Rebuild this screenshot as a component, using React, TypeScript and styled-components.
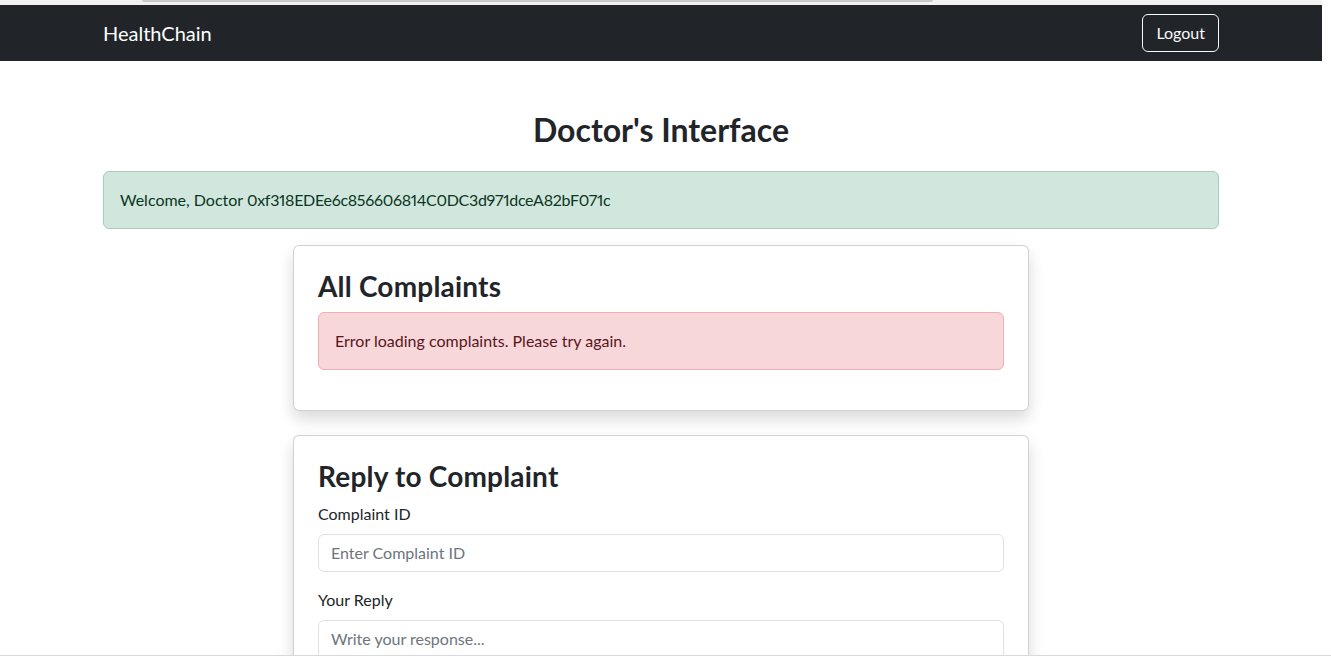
import React from "react";
import styled, { createGlobalStyle } from "styled-components";

const Global = createGlobalStyle`
  * { box-sizing: border-box; }
  html, body { margin: 0; padding: 0; background: #fff; overflow: hidden; }
  body {
    font-family: Lato, "Open Sans", Arial, sans-serif;
    font-size: 16px;
    line-height: 1.5;
    color: #212529;
    font-variant-numeric: proportional-nums;
  }
`;

const Page = styled.div`
  width: calc(100% - 9px);
`;

const TopStrip = styled.div`
  height: 5px;
  background: #f1f1f1;
  display: flex;
  align-items: flex-start;
`;

const Thumb = styled.div`
  margin-left: 142px;
  width: 791px;
  height: 2px;
  background: #c9c9c9;
  border-radius: 0 0 2px 2px;
`;

const Navbar = styled.nav`
  background: #212529;
  padding: 8px 0;
`;

const Container = styled.div`
  max-width: 1140px;
  margin: 0 auto;
  padding: 0 12px;
`;

const NavInner = styled(Container)`
  display: flex;
  align-items: center;
  justify-content: space-between;
`;

const Brand = styled.a`
  color: #fff;
  font-size: 20px;
  line-height: 30px;
  padding: 5px 0;
  text-decoration: none;
`;

const OutlineButton = styled.button`
  font-family: inherit;
  font-size: 16px;
  line-height: 24px;
  padding: 6px 13px;
  border: 1px solid #f8f9fa;
  border-radius: 6px;
  background: transparent;
  color: #f8f9fa;
  cursor: pointer;
`;

const Main = styled(Container)`
  margin-top: 50px;
`;

const PageTitle = styled.h2`
  margin: 0 0 22px;
  font-size: 32px;
  font-weight: 700;
  line-height: 1.2;
  text-align: center;
`;

const Alert = styled.div<{ $variant: "success" | "danger" }>`
  padding: 16px;
  margin-bottom: 16px;
  border-radius: 6px;
  border: 1px solid ${(p) => (p.$variant === "success" ? "#a3cfbb" : "#f1aeb5")};
  background: ${(p) => (p.$variant === "success" ? "#d1e7dd" : "#f8d7da")};
  color: ${(p) => (p.$variant === "success" ? "#0a3622" : "#58151c")};
`;

const Address = styled.span`
  letter-spacing: -0.3px;
`;

const Row = styled.div`
  display: flex;
  justify-content: center;
`;

const Column = styled.div`
  width: 736px;
  display: flex;
  flex-direction: column;
  gap: 24px;
`;

const Card = styled.section`
  background: #fff;
  border: 1px solid rgba(0, 0, 0, 0.175);
  border-radius: 6px;
  box-shadow: 0 8px 16px rgba(0, 0, 0, 0.15);
  padding: 24px;
`;

const CardTitle = styled.h3`
  margin: 0 0 8px;
  font-size: 28px;
  font-weight: 700;
  line-height: 1.2;
  letter-spacing: 0.2px;
`;

const Field = styled.div`
  margin-bottom: 16px;
`;

const Label = styled.label`
  display: block;
  margin-bottom: 8px;
`;

const Input = styled.input`
  display: block;
  width: 100%;
  font-family: inherit;
  font-size: 16px;
  line-height: 24px;
  padding: 6px 12px;
  color: #212529;
  background: #fff;
  border: 1px solid #dee2e6;
  border-radius: 6px;
  &::placeholder { color: #6c757d; opacity: 1; }
`;

const TextArea = styled.textarea`
  display: block;
  width: 100%;
  font-family: inherit;
  font-size: 16px;
  line-height: 24px;
  padding: 6px 12px;
  color: #212529;
  background: #fff;
  border: 1px solid #dee2e6;
  border-radius: 6px;
  resize: vertical;
  &::placeholder { color: #6c757d; opacity: 1; }
`;

const BottomEdge = styled.div`
  position: fixed;
  left: 0;
  right: 0;
  bottom: 0;
  height: 1px;
  background: #d9d9d9;
`;

export default function App() {
  return (
    <>
      <Global />
      <Page>
        <TopStrip>
          <Thumb />
        </TopStrip>
        <Navbar>
          <NavInner>
            <Brand href="#">HealthChain</Brand>
            <OutlineButton>Logout</OutlineButton>
          </NavInner>
        </Navbar>
        <Main>
          <PageTitle>Doctor's Interface</PageTitle>
          <Alert $variant="success">
            Welcome, Doctor <Address>0xf318EDEe6c856606814C0DC3d971dceA82bF071c</Address>
          </Alert>
          <Row>
            <Column>
              <Card>
                <CardTitle>All Complaints</CardTitle>
                <Alert $variant="danger">Error loading complaints. Please try again.</Alert>
              </Card>
              <Card>
                <CardTitle>Reply to Complaint</CardTitle>
                <Field>
                  <Label>Complaint ID</Label>
                  <Input placeholder="Enter Complaint ID" />
                </Field>
                <Field>
                  <Label>Your Reply</Label>
                  <TextArea rows={3} placeholder="Write your response..." />
                </Field>
              </Card>
            </Column>
          </Row>
        </Main>
      </Page>
      <BottomEdge />
    </>
  );
}
